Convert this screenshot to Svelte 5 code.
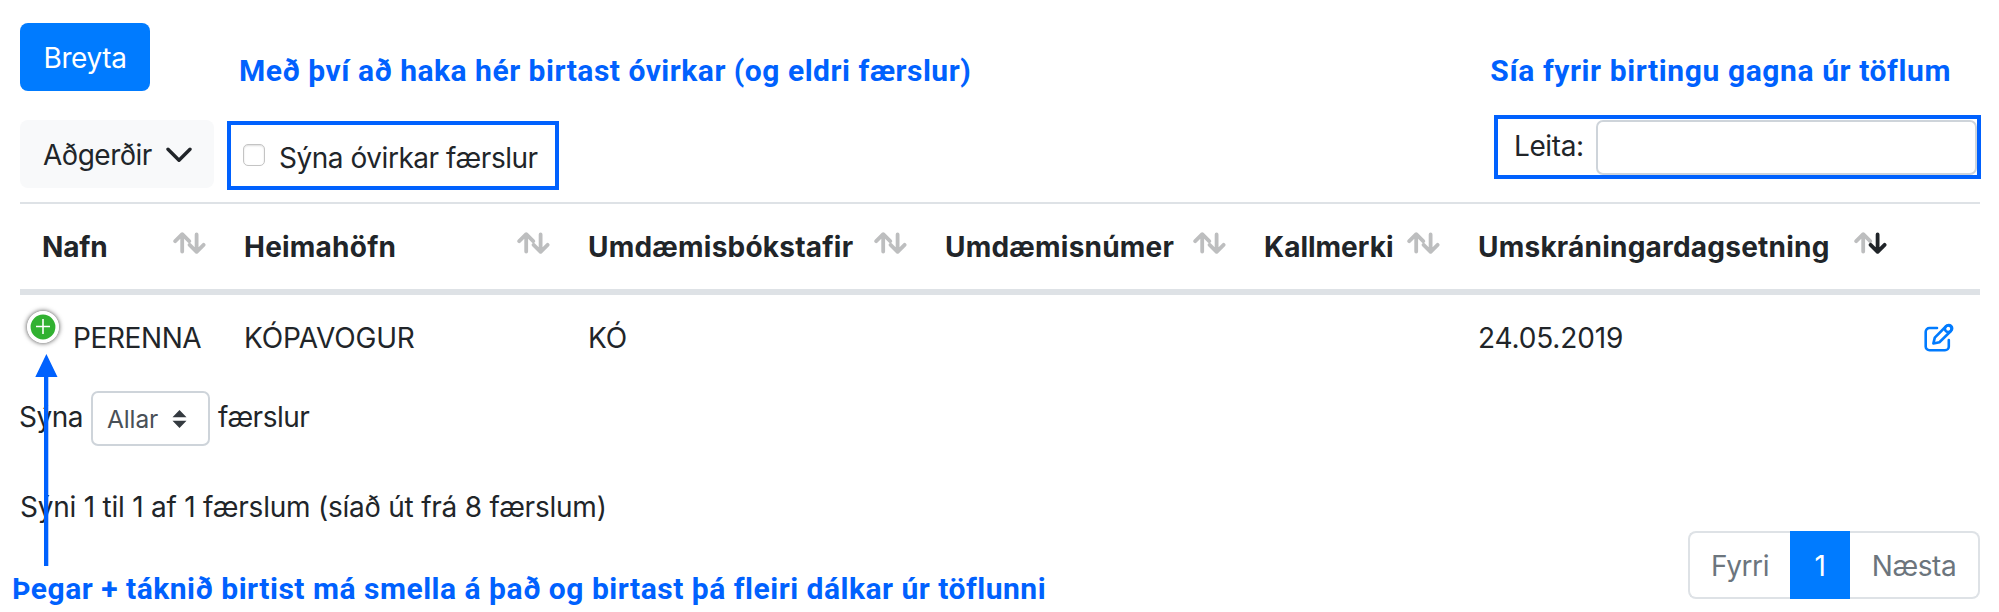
<script>
  const columns = [
    { label: 'Nafn', value: 'PERENNA' },
    { label: 'Heimahöfn', value: 'KÓPAVOGUR' },
    { label: 'Umdæmisbókstafir', value: 'KÓ' },
    { label: 'Umdæmisnúmer', value: '' },
    { label: 'Kallmerki', value: '' },
    { label: 'Umskráningardagsetning', value: '24.05.2019', sorted: true }
  ];
</script>

<main>
  <header class="top">
    <button class="primary">Breyta</button>
    <p class="note first">Með því að haka hér birtast óvirkar (og eldri færslur)</p>
    <p class="note second">Sía fyrir birtingu gagna úr töflum</p>
  </header>

  <section class="tools">
    <button class="actions"><span>Aðgerðir</span>
      <svg width="26" height="16" viewBox="0 0 26 16"><path d="M2 2.2 13 13.2 24 2.2" fill="none" stroke="#212529" stroke-width="3.4" stroke-linecap="round" stroke-linejoin="round" /></svg>
    </button>
    <label class="inactive"><i class="check"></i><span>Sýna óvirkar færslur</span></label>
    <label class="search"><span>Leita:</span><input type="text" /></label>
  </section>

  <section class="table">
    <div class="row head">
      {#each columns as c}
        <div class="cell"><span>{c.label}</span>
          <svg class="sort" width="33" height="22" viewBox="0 0 33 22" fill="none" stroke-width="3.8" stroke-linecap="round" stroke-linejoin="round">
            <path d="M2.2 9.2 9.2 2.2 16.2 9.2M9.2 3V19.6" stroke="#bdbebf" />
            <path d="M16.6 12.8 23.6 19.8 30.6 12.8M23.6 19V2.4" stroke={c.sorted ? '#212529' : '#bdbebf'} />
          </svg>
        </div>
      {/each}
      <div></div>
    </div>
    <div class="row body">
      {#each columns as c, i}
        <div class="cell" class:control={i === 0}>
          {#if i === 0}
            <svg class="plus" width="32" height="32" viewBox="0 0 32 32"><circle cx="16" cy="16" r="14.2" fill="#31b131" stroke="#fff" stroke-width="3.6" /><path d="M16 8v15M9 15.5h14" stroke="#fff" stroke-width="1.6" /></svg>
          {/if}
          <span>{c.value}</span>
        </div>
      {/each}
      <div class="cell edit">
        <svg width="30" height="30" viewBox="0 0 30 30" fill="none" stroke="#007bff" stroke-width="2.6" stroke-linecap="round" stroke-linejoin="round"><path d="M13 5H5.5A3.8 3.8 0 0 0 1.7 8.8V23.5A3.8 3.8 0 0 0 5.5 27.3H21A3.8 3.8 0 0 0 24.8 23.5V17" /><path d="M9.4 20.4 10.8 14.6 22.3 3A3.3 3.3 0 0 1 27.2 7.7L15.4 19.2Z" /><circle cx="24.2" cy="5.8" r="3.3" /></svg>
      </div>
    </div>
  </section>

  <div class="length"><span class="word">Sýna</span>
    <span class="select"><span>Allar</span><svg width="15" height="18" viewBox="0 0 15 18" fill="#343a40"><path d="M.5 7.3 7.5 0 14.5 7.3ZM.5 10.7 7.5 18 14.5 10.7Z" /></svg></span>
    <span class="word">færslur</span>
  </div>
  <p class="info">Sýni 1 til 1 af 1 færslum (síað út frá 8 færslum)</p>
  <nav><button>Fyrri</button><button class="active">1</button><button>Næsta</button></nav>
  <p class="note third">Þegar + táknið birtist má smella á það og birtast þá fleiri dálkar úr töflunni</p>
  <svg class="arrow" width="24" height="212" viewBox="0 0 24 212" fill="#0061fe"><path d="M12.4 0 23.5 23H14.3V212H10V23H1.3Z" /></svg>
</main>

<style>
  :global(body) { background: #fff; }
  main { position: relative; box-sizing: border-box; width: 1999px; height: 612px; padding: 23px 18px 0 20px; overflow: hidden; background: #fff; color: #212529; font: 28px/42px Inter, "Liberation Sans", sans-serif; letter-spacing: -.4px; }
  p { margin: 0; }
  button { font: inherit; letter-spacing: inherit; border: 0; margin: 0; box-sizing: border-box; }
  .note { color: #0061fe; font: 700 30px/40px Roboto, sans-serif; letter-spacing: .51px; white-space: nowrap; }
  .top { display: flex; height: 68px; }
  .primary { width: 130px; height: 68px; padding: 1px 0 0; border-radius: 8px; background: #007bff; color: #fff; }
  .first { margin: 28px 0 0 89px; }
  .second { margin: 28px 30px 0 auto; letter-spacing: .6px; }
  .tools { display: flex; height: 111px; align-items: flex-start; box-sizing: border-box; padding-top: 24px; }
  .actions { display: flex; align-items: center; justify-content: space-between; width: 194px; height: 68px; margin-top: 5px; padding: 1px 22px 0 23px; border-radius: 8px; background: #f8f9fa; color: inherit; letter-spacing: -.5px; }
  .inactive { display: flex; align-items: center; box-sizing: border-box; width: 332px; height: 69px; margin: 6px 0 0 13px; padding: 4px 0 0 12px; border: 4px solid #0061fe; white-space: nowrap; letter-spacing: -.46px; }
  .check { box-sizing: border-box; width: 22px; height: 22px; margin: -5px 14px 0 0; border: 1px solid #c4c4c4; border-radius: 5px; box-shadow: inset 0 1px 2px #ddd; }
  .search { display: flex; box-sizing: border-box; width: 487px; height: 64px; margin-left: auto; padding: 1px 0 0 16px; border: 4px solid #0061fe; line-height: 52px; }
  .search input { box-sizing: border-box; width: 381px; height: 55px; margin: 0 0 0 auto; border: 2px solid #ced4da; border-radius: 7px; }
  .table { width: 1960px; }
  .row { display: grid; grid-template-columns: 202px 344px 357px 319px 214px 447px 77px; align-items: center; }
  .head { height: 93px; box-sizing: border-box; border-top: 2px solid #dee2e6; border-bottom: 6px solid #dee2e6; font-weight: 700; letter-spacing: .22px; }
  .cell { display: flex; align-items: center; padding-left: 22px; }
  .head .cell:first-child { letter-spacing: -.2px; }
  .head .cell:nth-child(5) { letter-spacing: 0; }
  .sort { margin: -8px 16px 0 auto; }
  .body { height: 84px; padding-top: 1px; box-sizing: border-box; letter-spacing: -.15px; }
  .control { padding-left: 7px; letter-spacing: -.4px; }
  .plus { margin: -21px 14px 0 0; border-radius: 50%; box-shadow: 0 0 5px #444; }
  .edit { padding-left: 21px; }
  .length { display: flex; margin-top: 12px; height: 55px; align-items: center; letter-spacing: -.5px; }
  .word { margin: -4px 0 0 -1px; }
  .select { display: flex; align-items: center; justify-content: space-between; box-sizing: border-box; width: 119px; height: 55px; margin: 0 9px 0 8px; padding: 0 21px 0 14px; border: 2px solid #ced4da; border-radius: 7px; color: #495057; font-size: 24.5px; letter-spacing: -.1px; }
  .info { margin: 40px 0 0; letter-spacing: -.23px; }
  nav { display: flex; width: 292px; height: 68px; margin: 3px 1px 0 auto; box-sizing: border-box; }
  nav button { flex: 1; height: 68px; padding: 1px 0 0; border: 2px solid #dee2e6; background: #fff; color: #6c757d; }
  nav button:first-child { flex: 0 0 102px; border-right: 0; border-radius: 8px 0 0 8px; }
  nav button:last-child { border-left: 0; border-radius: 0 8px 8px 0; }
  nav .active { flex: 0 0 60px; border: 0; background: #007bff; color: #fff; }
  .third { position: absolute; left: 12px; top: 569px; }
  .arrow { position: absolute; left: 34px; top: 354px; }
</style>
